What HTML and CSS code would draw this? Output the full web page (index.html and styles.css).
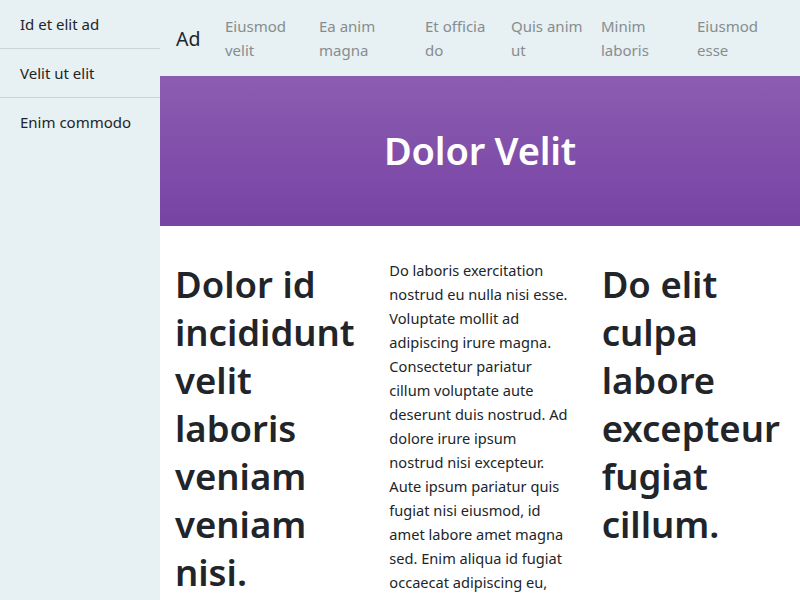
FILE: index.html
```html
<!DOCTYPE html>
<html lang="en">
<head>
<meta charset="utf-8">
<title>Dolor Velit</title>
<link rel="stylesheet" href="styles.css">
</head>
<body>
<aside class="sidebar">
  <a class="side-item" href="#">Id et elit ad</a>
  <a class="side-item" href="#">Velit ut elit</a>
  <a class="side-item" href="#">Enim commodo</a>
</aside>
<main class="main">
  <header class="navbar">
    <a class="brand" href="#">Ad</a>
    <nav class="nav-links">
      <a class="nav-link" href="#">Eiusmod velit</a>
      <a class="nav-link" href="#">Ea anim magna</a>
      <a class="nav-link" href="#">Et officia do</a>
      <a class="nav-link" href="#">Quis anim ut</a>
      <a class="nav-link" href="#">Minim laboris</a>
      <a class="nav-link" href="#">Eiusmod esse</a>
    </nav>
  </header>
  <section class="hero">
    <h1 class="hero-title">Dolor Velit</h1>
  </section>
  <section class="row">
    <div class="col">
      <h1 class="big">Dolor id incididunt velit laboris veniam veniam nisi.</h1>
    </div>
    <div class="col">
      <p class="text">Do laboris exercitation nostrud eu nulla nisi esse. Voluptate mollit ad adipiscing irure magna. Consectetur pariatur cillum voluptate aute deserunt duis nostrud. Ad dolore irure ipsum nostrud nisi excepteur. Aute ipsum pariatur quis fugiat nisi eiusmod, id amet labore amet magna sed. Enim aliqua id fugiat occaecat adipiscing eu, labore sint dolor ullamco.</p>
    </div>
    <div class="col">
      <h1 class="big">Do elit culpa labore excepteur fugiat cillum.</h1>
    </div>
  </section>
</main>
</body>
</html>
```
FILE: styles.css
```css
* { box-sizing: border-box; }
html, body { margin: 0; padding: 0; }
body {
  display: flex;
  min-height: 100vh;
  font-family: "Noto Sans", "Open Sans", sans-serif;
  font-size: 15px;
  line-height: 24px;
  color: #212529;
  background: #ffffff;
  overflow: hidden;
}
a { text-decoration: none; }

.sidebar {
  width: 160px;
  flex: 0 0 160px;
  background: #e7f0f2;
  display: flex;
  flex-direction: column;
}
.side-item {
  display: block;
  padding: 12px 20px;
  color: #212529;
  border-bottom: 1px solid #ccd4d7;
}
.side-item:last-child { border-bottom: none; }

.main {
  flex: 1;
  min-width: 0;
  display: flex;
  flex-direction: column;
}

.navbar {
  background: #e7f0f2;
  display: flex;
  align-items: center;
  padding: 14px 16px;
  height: 76px;
}
.brand {
  width: 49px;
  flex: 0 0 49px;
  font-size: 19.5px;
  color: #212529;
  padding-top: 2px;
}
.nav-links {
  display: grid;
  grid-template-columns: 94px 106px 86px 90px 96px 1fr;
}
.nav-link {
  color: #868d90;
  padding-right: 10px;
}

.hero {
  height: 150px;
  background: linear-gradient(to bottom, #8b5db1, #7743a4);
  display: flex;
  align-items: center;
  justify-content: center;
}
.hero-title {
  margin: 0;
  color: #ffffff;
  font-size: 38px;
  font-weight: 600;
  line-height: 48px;
  letter-spacing: -0.2px;
  padding-bottom: 2px;
}

.row {
  display: flex;
  padding-top: 34px;
}
.col {
  flex: 0 0 33.3333%;
  padding: 0 16px;
}
.big {
  margin: 0 0 0 -1px;
  font-size: 36.5px;
  font-weight: 600;
  line-height: 48px;
}
.text {
  margin: -2px 0 0;
  font-size: 14.6px;
  line-height: 24px;
}
```
